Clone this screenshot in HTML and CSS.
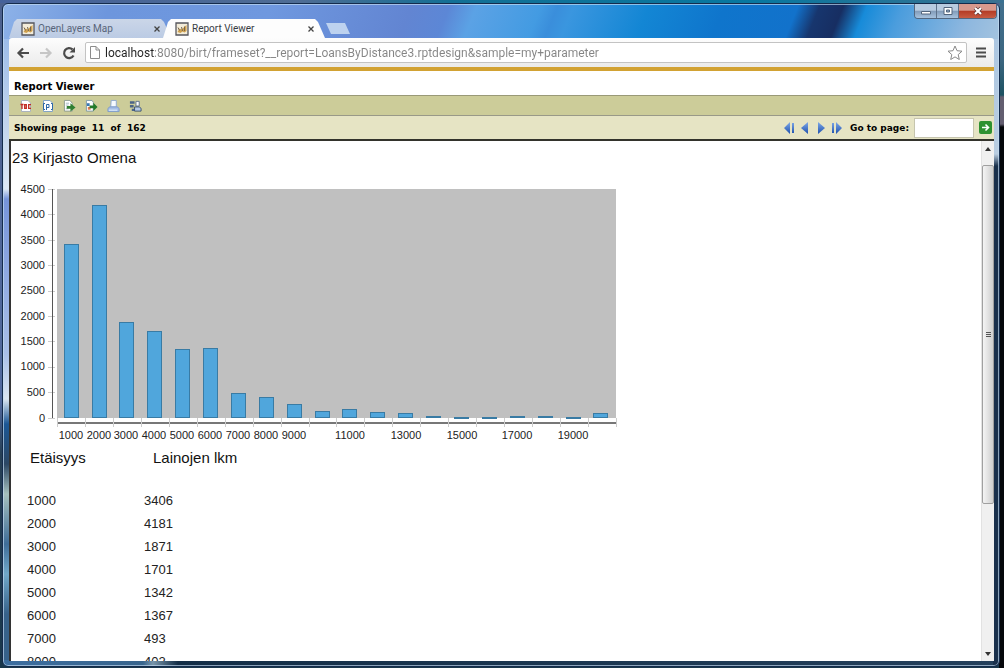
FILE: index.html
```html
<!DOCTYPE html>
<html lang="fi">
<head>
<meta charset="utf-8">
<title>Report Viewer</title>
<link rel="stylesheet" href="styles.css">
</head>
<body>
<svg width="0" height="0" class="defs" aria-hidden="true">
  <defs>
    <linearGradient id="blue" x1="0" y1="0" x2="0" y2="1"><stop offset="0" stop-color="#7fa9e8"/><stop offset="1" stop-color="#1d4fae"/></linearGradient>
    <symbol id="birt" viewBox="0 0 14 14"><path d="M1 1h12v12H1z" fill="#f3ecd9" stroke="#55565c" stroke-width="1.300"/><path d="M2.500 10l2-3.500 2 1L11.500 3v6l-2 1.500-2-1-2 1.500z" fill="#cfa14f"/><path d="M3 5.500l1.500 3M6.500 5l1 4M9.500 4.500v4.500" fill="none" stroke="#77664f"/></symbol>
    <symbol id="cross" viewBox="0 0 8 8"><path d="M1.500 1.500l5 5m0-5l-5 5" stroke="currentColor" stroke-width="1.300"/></symbol>
  </defs>
</svg>
<div class="window">
  <div class="titlebar">
    <div class="tabs">
      <div class="tab"><svg class="favicon"><use href="#birt"/></svg><span>OpenLayers Map</span><button class="close" aria-label="Close OpenLayers Map"><svg width="8" height="8"><use href="#cross"/></svg></button></div>
      <div class="tab active"><svg class="favicon"><use href="#birt"/></svg><span>Report Viewer</span><button class="close" aria-label="Close Report Viewer"><svg width="8" height="8"><use href="#cross"/></svg></button></div>
      <button class="newtab" aria-label="New tab"></button>
    </div>
    <div class="controls">
      <button aria-label="Minimize"><svg width="12" height="10" viewBox="0 0 12 10"><path d="M1.500 5.500h9v2.500h-9z" fill="#fff" stroke="#52657d"/></svg></button>
      <button aria-label="Restore"><svg width="12" height="10" viewBox="0 0 12 10"><path d="M2 1.500h8v7H2z" fill="#fff" stroke="#52657d"/><path d="M4.500 4h3v2h-3z" fill="#8fa9c4" stroke="#52657d"/></svg></button>
      <button class="exit" aria-label="Close"><svg width="12" height="10" viewBox="0 0 12 10"><path d="M3 2l6 6m0-6L3 8" stroke="#5d3535" stroke-width="3.600"/><path d="M3 2l6 6m0-6L3 8" stroke="#fff" stroke-width="2.200"/></svg></button>
    </div>
  </div>
  <div class="toolbar">
    <button aria-label="Back"><svg width="14" height="12" viewBox="0 0 14 12"><path d="M13 6H2.500M7 1.500L2.500 6 7 10.500" fill="none" stroke="#4b4b4b" stroke-width="2.200"/></svg></button>
    <button aria-label="Forward"><svg width="14" height="12" viewBox="0 0 14 12"><path d="M1 6h10.500M7 1.500L11.500 6 7 10.500" fill="none" stroke="#c6c6c6" stroke-width="2.200"/></svg></button>
    <button aria-label="Reload"><svg width="14" height="14" viewBox="0 0 14 14"><path d="M11.500 9.500A5 5 0 1 1 10.500 3.400" fill="none" stroke="#4b4b4b" stroke-width="2.200"/><path d="M13 1v5.500H7.500z" fill="#4b4b4b"/></svg></button>
    <div class="omnibox">
      <svg width="10" height="13" viewBox="0 0 10 13"><path d="M.500.500h5.500l3.500 3.500v8.500h-9zM6 .500V4h3.500" fill="#fff" stroke="#8c8c8c"/></svg>
      <input class="url" type="text" aria-label="Address" value="localhost:8080/birt/frameset?__report=LoansByDistance3.rptdesign&amp;sample=my+parameter">
      <button aria-label="Bookmark"><svg width="16" height="15" viewBox="0 0 16 15"><path d="M8 1l2 4.700 5 .500-3.800 3.400 1.100 4.900L8 11.900l-4.300 2.600 1.100-4.900L1 6.200l5-.500z" fill="#fff" stroke="#8a8a8a"/></svg></button>
    </div>
    <button class="menu" aria-label="Menu"><svg width="10" height="11" viewBox="0 0 10 11"><path d="M0 1.500h10M0 5.500h10M0 9.500h10" stroke="#4b4b4b" stroke-width="2.200"/></svg></button>
  </div>
  <div class="viewer">
    <h1>Report Viewer</h1>
    <div class="actions">
      <button aria-label="Table of contents"><svg width="12" height="14" viewBox="0 0 12 14"><path d="M1.500 1.500H8L10.500 4v8.500h-9z" fill="#fff" stroke="#aab3be"/><path d="M.500 5.500h3M2 5.500V10M4.700 5.700h1.600v3.600H4.700zM11 5.700H8.700v3.600H11" fill="none" stroke="#c22a22" stroke-width="1.300"/></svg></button>
      <button aria-label="Parameters"><svg width="12" height="14" viewBox="0 0 12 14"><path d="M1.500 1.500H8L10.500 4v8.500h-9z" fill="#fff" stroke="#83a4c4"/><path d="M3 4.500H1.500v6H3M9 4.500h1.500v6H9M4.500 11V5.500H7v3H4.500" fill="none" stroke="#2c67a8"/></svg></button>
      <button aria-label="Export data"><svg width="14" height="14" viewBox="0 0 14 14"><path d="M1.500 1h6l2.500 3v8.500H1.500z" fill="#fff" stroke="#8b9a91"/><path d="M3 4h3.500M3 6h3M3 10h3" stroke="#a3b7c4"/><path d="M4 7h4V4l5.500 4.500L8 13v-3H4z" fill="#2f7f31"/></svg></button>
      <button aria-label="Export report"><svg width="14" height="14" viewBox="0 0 14 14"><path d="M1.500 1h6L9 3v9.500H1.500z" fill="#fff" stroke="#7e98a5"/><path d="M2 4h3v3H2z" fill="#3878b5"/><path d="M3 8h3v3H3z" fill="#df7b50"/><path d="M5 6.500h4v-3L13.500 8 9 12.500v-3H5z" fill="#237a2a"/></svg></button>
      <button aria-label="Print report"><svg width="14" height="14" viewBox="0 0 14 14"><path d="M4.500 1H10v7H4z" fill="#f5faff" stroke="#8ba8ce"/><path d="M2.500 8h9l1.500 2v3H1v-3z" fill="#a5bfe6" stroke="#7d9acb"/><path d="M2 11.500h9" stroke="#e9f2ff"/></svg></button>
      <button aria-label="Print on server"><svg width="14" height="14" viewBox="0 0 14 14"><path d="M1 2h5v2.500H1zM1 6h4v2.500H1zM3 10h4v2.500H3z" fill="#4b6488"/><path d="M7.500 2H11v5H7.500z" fill="#fff" stroke="#5b6f8e"/><path d="M6 8h5l2 1.500v3H6z" fill="#b5cae8" stroke="#38506f"/></svg></button>
    </div>
    <div class="navbar">
      <span class="pages">Showing page&nbsp; 11&nbsp; of&nbsp; 162</span>
      <div class="pager">
        <button aria-label="First page"><svg width="12" height="12" viewBox="0 0 12 12"><path d="M7 0v12L1 6zM9 1h2v10H9z" fill="url(#blue)"/></svg></button>
        <button aria-label="Previous page"><svg width="12" height="12" viewBox="0 0 12 12"><path d="M9 0v12L2 6z" fill="url(#blue)"/></svg></button>
        <button aria-label="Next page"><svg width="12" height="12" viewBox="0 0 12 12"><path d="M3 0v12l7-6z" fill="url(#blue)"/></svg></button>
        <button aria-label="Last page"><svg width="12" height="12" viewBox="0 0 12 12"><path d="M5 0v12l6-6zM1 1h2v10H1z" fill="url(#blue)"/></svg></button>
      </div>
      <label for="goto">Go to page:</label>
      <input id="goto" class="goto" type="text">
      <button class="go" aria-label="Go"><svg width="13" height="13" viewBox="0 0 13 13"><path d="M3 6.500h6M6.500 3.500l3 3-3 3" fill="none" stroke="#fff" stroke-width="1.600"/></svg></button>
    </div>
  </div>
  <div class="document">
    <main class="report">
      <h2>23 Kirjasto Omena</h2>
      <svg class="chart" width="610" height="264" viewBox="0 0 610 264" role="img" aria-label="Lainojen lkm etäisyyden mukaan">
        <rect class="plot" x="45" y="9" width="559" height="229"/>
        <path class="tick" d="M36 9h7M36 34h7M36 60h7M36 85h7M36 111h7M36 136h7M36 161h7M36 187h7M36 212h7M36 238h7"/>
        <path class="axis" d="M40 9v229"/>
        <path class="axis base" d="M45 243h559"/>
        <path class="tick" d="M45 238v9M73 238v9M101 238v9M129 238v9M157 238v9M185 238v9M213 238v9M241 238v9M269 238v9M297 238v9M324 238v9M352 238v9M380 238v9M408 238v9M436 238v9M464 238v9M492 238v9M520 238v9M548 238v9M576 238v9M604 238v9"/>
        <g class="bars">
          <rect x="52" y="64" width="14" height="173"/><rect x="80" y="25" width="14" height="212"/><rect x="107" y="142" width="14" height="95"/><rect x="135" y="151" width="14" height="86"/><rect x="163" y="169" width="14" height="68"/><rect x="191" y="168" width="14" height="69"/><rect x="219" y="213" width="14" height="24"/><rect x="247" y="217" width="14" height="20"/><rect x="275" y="224" width="14" height="13"/><rect x="303" y="231" width="14" height="6"/><rect x="330" y="229" width="14" height="8"/><rect x="358" y="232" width="14" height="5"/><rect x="386" y="233" width="14" height="4"/><rect x="414" y="236" width="14" height="1"/><rect x="442" y="237" width="14" height="1"/><rect x="470" y="237" width="14" height="1"/><rect x="498" y="236" width="14" height="1"/><rect x="526" y="236" width="14" height="1"/><rect x="554" y="237" width="14" height="1"/><rect x="581" y="233" width="14" height="4"/>
        </g>
        <g class="ylabels"><text x="33" y="13">4500</text><text x="33" y="38">4000</text><text x="33" y="64">3500</text><text x="33" y="89">3000</text><text x="33" y="114">2500</text><text x="33" y="140">2000</text><text x="33" y="165">1500</text><text x="33" y="190">1000</text><text x="33" y="216">500</text><text x="33" y="242">0</text></g>
        <g class="xlabels"><text x="59" y="259">1000</text><text x="87" y="259">2000</text><text x="114" y="259">3000</text><text x="142" y="259">4000</text><text x="170" y="259">5000</text><text x="198" y="259">6000</text><text x="226" y="259">7000</text><text x="254" y="259">8000</text><text x="282" y="259">9000</text><text x="338" y="259">11000</text><text x="394" y="259">13000</text><text x="450" y="259">15000</text><text x="505" y="259">17000</text><text x="561" y="259">19000</text></g>
      </svg>
      <table class="loans">
        <thead><tr><th>Etäisyys</th><th>Lainojen lkm</th></tr></thead>
        <tbody>
          <tr><td>1000</td><td>3406</td></tr>
          <tr><td>2000</td><td>4181</td></tr>
          <tr><td>3000</td><td>1871</td></tr>
          <tr><td>4000</td><td>1701</td></tr>
          <tr><td>5000</td><td>1342</td></tr>
          <tr><td>6000</td><td>1367</td></tr>
          <tr><td>7000</td><td>493</td></tr>
          <tr><td>8000</td><td>402</td></tr>
        </tbody>
      </table>
    </main>
    <div class="scrollbar" aria-hidden="true">
      <svg width="12" height="24" viewBox="0 0 12 24"><path d="M3 10l3-4 3 4z" fill="#333"/></svg>
      <div class="thumb"><i></i><i></i><i></i></div>
      <div class="rest"></div>
      <svg width="12" height="16" viewBox="0 0 12 16"><path d="M3 7l3 4 3-4z" fill="#333"/></svg>
    </div>
  </div>
</div>
</body>
</html>
```
FILE: styles.css
```css
* { box-sizing: border-box; }
body {
  margin: 0;
  height: 100vh;
  padding: 3px 4px 1px 2px;
  display: flex;
  flex-direction: column;
  overflow: hidden;
  font-family: "Liberation Sans", Arial, sans-serif;
  background: linear-gradient(90deg, #45619a, #4f6d94 30%, #137095 45%, #0878a0 75%, #3b7191) top / 100% 3px no-repeat,
    linear-gradient(#42708e 0, #3c6680 60px, #1d5262 95px, #635e70 97px, #635e70 124px, #05070b 127px) right / 5px 100% no-repeat,
    linear-gradient(#4c618e, #526a9f 60%, #263f55 68%, #19374b);
}
button { border: 0; padding: 0; background: none; display: flex; align-items: center; justify-content: center; }
input { border: 0; outline: 0; min-width: 0; }
.defs { position: absolute; }
.window {
  flex: 1;
  min-height: 0;
  display: flex;
  flex-direction: column;
  padding: 0 5px 5px 6px;
  border: 1px solid #142b4c;
  border-radius: 6px;
  position: relative;
  background:
    linear-gradient(112deg, #8db2e8 0, #6d96dd 100px, #6f98df 250px, #6285d2 380px, #5c87d6 415px, #5ba2e5 440px, #439be2 500px, #3a8edb 515px, #3a96df 530px, #1386d4 600px, #0f75cc 670px, #1272cb 738px, #17366e 758px, #172e62 780px, #178bd9 802px, #4b9ddd 835px, #8db7df 900px, #a3c3df 100%) top / 100% 35px no-repeat,
    linear-gradient(#a9c5e2 0, #b9cde1 150px, #19304c 162px, #19304c 100%) right / 6px 100% no-repeat,
    linear-gradient(90deg, #3c6ea0, #38658d 140px, #7895aa 150px, #132e47 175px, #24405c) bottom / 100% 6px no-repeat,
    linear-gradient(#8db2e8 0, #c6d7ed 130px, #dde8f5 185px, #7694da 195px, #a9bfe8 350px, #dce6f0 395px, #1c5795 420px, #2c4764 460px, #a5c0bd 490px, #3f6d98 540px, #71a8c9 570px, #37628a 610px);
  box-shadow: inset 0 0 0 1px #c4dcf1aa;
}
.titlebar { height: 34px; display: flex; align-items: flex-end; }
.tabs { display: flex; align-items: flex-end; }
.tab {
  width: 162px;
  height: 19px;
  padding: 0 10px 0 12px;
  display: flex;
  align-items: center;
  gap: 3px;
  font: 10px Roboto, "Open Sans", sans-serif;
  color: #596579;
  background: linear-gradient(#cbd6e8, #bbcbe4);
  clip-path: polygon(8px 0, 152px 0, 155px 3px, 162px 100%, 0 100%, 5px 3px);
}
.tab.active { width: 165px; margin-left: -8px; padding-right: 13px; color: #383c43; background: #fdfdfd; }
.favicon { width: 14px; height: 14px; }
.close { margin-left: auto; color: #444; }
.newtab {
  width: 24px;
  height: 11px;
  margin: 0 0 4px -2px;
  background: #bdd2ef;
  clip-path: polygon(0 0, 19px 0, 24px 100%, 5px 100%);
}
.controls {
  position: absolute;
  top: 0;
  right: 2px;
  display: flex;
  height: 15px;
  border: 1px solid #53677f;
  border-top: 0;
  border-radius: 0 0 4px 4px;
  overflow: hidden;
}
.controls button { width: 22px; background: linear-gradient(#b8cbe0 45%, #819bb9 50%, #a7c2dd); border-right: 1px solid #5d7189; }
.controls .exit { width: 37px; border: 0; background: linear-gradient(#d8998d 45%, #b43b25 50%, #c75c43); }
.toolbar {
  height: 29px;
  padding: 0 8px 0 7px;
  display: flex;
  align-items: center;
  gap: 9px;
  background: linear-gradient(#fdfdfd, #ebebeb);
  border-radius: 3px 3px 0 0;
}
.omnibox {
  flex: 1;
  height: 21px;
  padding: 0 3px 0 4px;
  display: flex;
  align-items: center;
  gap: 5px;
  background: #fff;
  border: 1px solid #c3c3c3;
  border-radius: 2px;
}
.url {
  flex: 1;
  padding: 0;
  font: 12px Roboto, "Open Sans", sans-serif;
  color: transparent;
  background: linear-gradient(90deg, #222 49px, #858585 49px);
  -webkit-background-clip: text;
  background-clip: text;
}
.viewer { background: #fff; border-top: 4px solid #d2a233; font-family: Verdana, "DejaVu Sans", sans-serif; }
h1 { margin: 0; height: 24px; padding: 8px 5px 0; font-size: 10px; line-height: 16px; }
.actions { height: 20px; padding-left: 10px; display: flex; align-items: center; gap: 9px; background: #cccc99; border-top: 1px solid #999977; }
.actions button { width: 13px; }
.navbar {
  height: 26px;
  padding: 0 2px 0 5px;
  display: flex;
  align-items: center;
  font-size: 9px;
  font-weight: bold;
  background: #e6e4c4;
  border-top: 1px solid #999988;
  border-bottom: 2px solid #33332c;
}
.pages { margin-right: auto; }
.pager { display: flex; gap: 4px; margin-right: 7px; }
.goto { width: 60px; height: 20px; margin: 0 5px; background: #fff; border: 1px solid #c6c5ae; }
.go { width: 13px; height: 13px; background: #2e9130; border-radius: 2px; }
.document { flex: 1; min-height: 0; display: flex; background: #fff; border-left: 2px solid #333; }
.report { flex: 1; min-width: 0; overflow: hidden; padding: 7px 1px; color: #111; }
h2 { margin: 0 0 12px; font-size: 15px; line-height: 20px; font-weight: normal; }
.chart { display: block; shape-rendering: crispEdges; font-size: 11px; }
.plot { fill: #c0c0c0; }
.tick { fill: none; stroke: #cccccc; }
.axis { stroke: #555; }
.axis.base { stroke: #777; stroke-width: 2px; }
.bars rect { fill: #50a6dc; stroke: #397ba4; }
.chart text { fill: #222; }
.ylabels { text-anchor: end; }
.xlabels { text-anchor: middle; }
.loans { border-collapse: collapse; table-layout: fixed; margin-left: 15px; }
.loans th { width: 117px; height: 45px; padding: 4px 0 0 3px; vertical-align: top; text-align: left; font-size: 15px; line-height: 20px; font-weight: normal; }
.loans th + th { padding-left: 9px; }
.loans td { height: 23px; padding: 0; font-size: 13px; line-height: 23px; color: #222; }
.scrollbar { width: 13px; display: flex; flex-direction: column; background: #f0f0f0; border-left: 1px solid #e2e2e2; }
.thumb {
  flex: 69;
  display: flex;
  flex-direction: column;
  align-items: center;
  justify-content: center;
  gap: 1px;
  background: linear-gradient(90deg, #f4f4f4, #cfcfcf);
  border: 1px solid #a0a0a0;
  border-radius: 2px;
}
.thumb i { width: 5px; height: 1px; background: #555; }
.rest { flex: 29; }
```
